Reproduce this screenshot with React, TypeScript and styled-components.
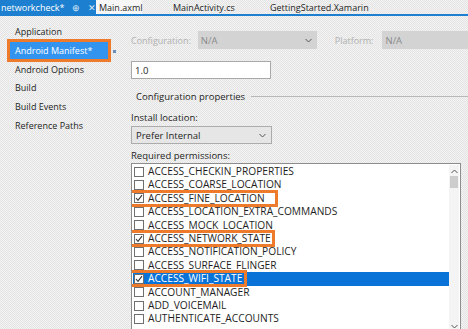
import styled, { createGlobalStyle } from "styled-components";

const GlobalStyle = createGlobalStyle`
  html, body {
    margin: 0;
    padding: 0;
    background: #ececec;
  }
  * { box-sizing: border-box; }
`;

const orange = "#ee7a2c";

const Page = styled.div`
  width: 468px;
  height: 329px;
  overflow: hidden;
  font-family: "Open Sans", "Noto Sans", sans-serif;
  font-size: 9.5px;
  color: #1e1e1e;
  background-color: #ededed;
  background-image: repeating-conic-gradient(#f3f3f3 0 25%, #e4e4e4 0 50%);
  background-size: 2px 2px;
  display: flex;
  flex-direction: column;
`;

const TabBar = styled.div`
  height: 16px;
  display: flex;
  align-items: stretch;
  border-bottom: 2px solid #1c7fd0;
  flex-shrink: 0;
`;

const Tab = styled.div<{ $active?: boolean; $width: number; $pad: number }>`
  width: ${(p) => p.$width}px;
  display: flex;
  align-items: center;
  gap: 8px;
  padding-left: ${(p) => p.$pad}px;
  background: ${(p) => (p.$active ? "#1c7fd0" : p.$width < 80 ? "#f7f7f7" : "transparent")};
  color: ${(p) => (p.$active ? "#fff" : "#1e1e1e")};
  white-space: nowrap;
  font-size: 9px;
`;

const TabIcon = styled.span`
  font-size: 9px;
  color: #d8e8f7;
`;

const Body = styled.div`
  flex: 1;
  display: flex;
`;

const Sidebar = styled.div`
  width: 128px;
  padding: 7px 0 0 10px;
  display: flex;
  flex-direction: column;
  flex-shrink: 0;
  font-size: 9px;
`;

const NavItem = styled.div<{ $selected?: boolean }>`
  height: 17px;
  margin-bottom: 1.8px;
  width: 98px;
  display: flex;
  align-items: center;
  padding-left: 5px;
  white-space: nowrap;
  position: relative;
  background: ${(p) => (p.$selected ? "#3394f0" : "transparent")};
  color: ${(p) => (p.$selected ? "#fff" : "#1e1e1e")};
  box-shadow: ${(p) => (p.$selected ? `0 0 0 3px ${orange}` : "none")};
`;

const Marker = styled.span`
  position: absolute;
  right: -8px;
  top: 8px;
  width: 3px;
  height: 3px;
  background: #6a8fb8;
`;

const Content = styled.div`
  flex: 1;
  padding: 15px 0 0 3px;
  display: flex;
  flex-direction: column;
`;

const ConfigRow = styled.div`
  display: flex;
  align-items: center;
  height: 18px;
`;

const DimLabel = styled.span<{ $left: number; $gap: number }>`
  color: #b0b0b0;
  margin: 0 ${(p) => p.$gap}px 0 ${(p) => p.$left}px;
  font-size: 9px;
`;

const DisabledCombo = styled.div<{ $width: number }>`
  width: ${(p) => p.$width}px;
  height: 18px;
  background: #d3d3d3;
  color: #8a8a8a;
  display: flex;
  align-items: center;
  justify-content: space-between;
  padding: 0 5px 0 3px;
`;

const Chevron = styled.svg`
  width: 7px;
  height: 5px;
`;

const TextInput = styled.div`
  margin-top: 12px;
  width: 140px;
  height: 18px;
  background: #fff;
  border: 1px solid #a9a9a9;
  display: flex;
  align-items: center;
  padding-left: 3px;
`;

const GroupHeader = styled.div`
  margin-top: 9px;
  display: flex;
  align-items: center;
  gap: 6px;
  height: 16px;
  padding-left: 5px;
`;

const GroupLine = styled.div`
  flex: 1;
  height: 1px;
  background: #b8b8b8;
  margin-top: 1px;
`;

const FieldLabel = styled.div<{ $top: number }>`
  margin-top: ${(p) => p.$top}px;
  height: 12px;
  display: flex;
  align-items: center;
`;

const Combo = styled.div`
  margin-top: 3px;
  width: 141px;
  height: 18px;
  background: #e6e6e6;
  border: 1px solid #acacac;
  display: flex;
  align-items: center;
  justify-content: space-between;
  padding: 0 5px 0 4px;
`;

const ListBox = styled.div`
  margin-top: 2px;
  width: 330px;
  flex: 1;
  background: #fff;
  border: 1px solid #8d8d8d;
  border-bottom: none;
  display: flex;
  padding: 1px 1px 0 1px;
  overflow: hidden;
`;

const Rows = styled.div`
  flex: 1;
  display: flex;
  flex-direction: column;
  font-size: 10.2px;
  line-height: 13.4px;
`;

const Row = styled.div<{ $selected?: boolean }>`
  height: 13.4px;
  display: flex;
  align-items: center;
  gap: 4px;
  padding-left: 1px;
  white-space: nowrap;
  position: relative;
  background: ${(p) => (p.$selected ? "#0a73d8" : "transparent")};
  color: ${(p) => (p.$selected ? "#fff" : "#1e1e1e")};
`;

const Box = styled.span`
  width: 10px;
  height: 10px;
  border: 1px solid #6f6f6f;
  background: #fff;
  flex-shrink: 0;
  display: flex;
  align-items: center;
  justify-content: center;
`;

const Highlight = styled.span<{ $width: number }>`
  position: absolute;
  left: -5px;
  top: -2px;
  width: ${(p) => p.$width}px;
  height: 17px;
  border: 3px solid ${orange};
  pointer-events: none;
`;

const ScrollBar = styled.div`
  width: 10px;
  display: flex;
  flex-direction: column;
  align-items: center;
  padding-top: 4px;
  background: #f4f4f4;
`;

const Thumb = styled.div`
  margin-top: 2px;
  width: 8px;
  height: 12px;
  background: #cdcdcd;
`;

const Spacer = styled.div`
  flex: 1;
`;

const ChevronDown = () => (
  <Chevron viewBox="0 0 7 5">
    <path d="M0.5 1 L3.5 4 L6.5 1" fill="none" stroke="#555" strokeWidth="1" />
  </Chevron>
);

const ChevronUp = () => (
  <Chevron viewBox="0 0 7 5">
    <path d="M0.5 4 L3.5 1 L6.5 4" fill="none" stroke="#555" strokeWidth="1" />
  </Chevron>
);

const Check = () => (
  <svg width="8" height="8" viewBox="0 0 8 8">
    <path d="M1 4 L3 6.3 L7 1.2" fill="none" stroke="#333" strokeWidth="1.1" />
  </svg>
);

const permissions: { name: string; checked?: boolean; selected?: boolean; mark?: number }[] = [
  { name: "ACCESS_CHECKIN_PROPERTIES" },
  { name: "ACCESS_COARSE_LOCATION" },
  { name: "ACCESS_FINE_LOCATION", checked: true, mark: 150 },
  { name: "ACCESS_LOCATION_EXTRA_COMMANDS" },
  { name: "ACCESS_MOCK_LOCATION" },
  { name: "ACCESS_NETWORK_STATE", checked: true, mark: 147 },
  { name: "ACCESS_NOTIFICATION_POLICY" },
  { name: "ACCESS_SURFACE_FLINGER" },
  { name: "ACCESS_WIFI_STATE", checked: true, selected: true, mark: 119 },
  { name: "ACCOUNT_MANAGER" },
  { name: "ADD_VOICEMAIL" },
  { name: "AUTHENTICATE_ACCOUNTS" },
];

const navItems = [
  "Application",
  "Android Manifest*",
  "Android Options",
  "Build",
  "Build Events",
  "Reference Paths",
];

export default function App() {
  return (
    <>
      <GlobalStyle />
      <Page>
        <TabBar>
          <Tab $active $width={96} $pad={1}>
            networkcheck*
            <TabIcon>⊕</TabIcon>
            <TabIcon>✕</TabIcon>
          </Tab>
          <Tab $width={46} $pad={3}>Main.axml</Tab>
          <Tab $width={128} $pad={31}>
            MainActivity.cs
          </Tab>
          <Tab $width={198} $pad={0}>
            GettingStarted.Xamarin
          </Tab>
        </TabBar>
        <Body>
          <Sidebar>
            {navItems.map((item) => (
              <NavItem key={item} $selected={item === "Android Manifest*"}>
                {item}
                {item === "Android Manifest*" && <Marker />}
              </NavItem>
            ))}
          </Sidebar>
          <Content>
            <ConfigRow>
              <DimLabel $left={0} $gap={7}>Configuration:</DimLabel>
              <DisabledCombo $width={119}>
                N/A
                <ChevronDown />
              </DisabledCombo>
              <DimLabel $left={18} $gap={9}>
                Platform:
              </DimLabel>
              <DisabledCombo $width={100}>N/A</DisabledCombo>
            </ConfigRow>
            <TextInput>1.0</TextInput>
            <GroupHeader>
              Configuration properties
              <GroupLine />
            </GroupHeader>
            <FieldLabel $top={7}>Install location:</FieldLabel>
            <Combo>
              Prefer Internal
              <ChevronDown />
            </Combo>
            <FieldLabel $top={5}>Required permissions:</FieldLabel>
            <ListBox>
              <Rows>
                {permissions.map((p) => (
                  <Row key={p.name} $selected={p.selected}>
                    <Box>{p.checked && <Check />}</Box>
                    {p.name}
                    {p.mark && <Highlight $width={p.mark} />}
                  </Row>
                ))}
              </Rows>
              <ScrollBar>
                <ChevronUp />
                <Thumb />
                <Spacer />
                <ChevronDown />
              </ScrollBar>
            </ListBox>
          </Content>
        </Body>
      </Page>
    </>
  );
}
